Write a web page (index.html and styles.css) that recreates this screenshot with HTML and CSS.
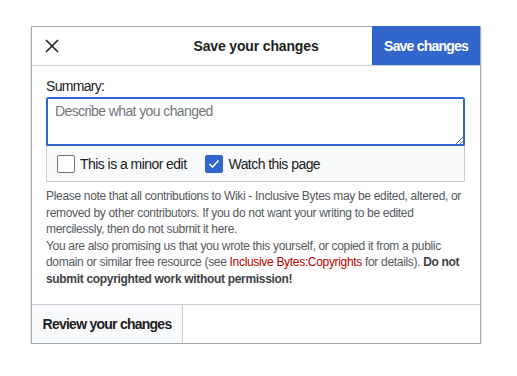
FILE: index.html
```html
<!DOCTYPE html>
<html lang="en">
<head>
    <meta charset="UTF-8">
    <meta name="viewport" content="width=device-width, initial-scale=1.0">
    <title>Save your changes</title>
    <link rel="stylesheet" href="styles.css">
</head>
<body>

    <div class="dialog">
        <div class="dialog-head">
            <div class="head-left">
                <button type="button" class="close-btn" aria-label="Close">
                    <svg width="14" height="14" viewBox="0 0 14 14">
                        <path d="M1 1 L13 13 M13 1 L1 13" stroke="#202122" stroke-width="1.6" fill="none"/>
                    </svg>
                </button>
            </div>
            <div class="title">Save your changes</div>
            <div class="head-right">
                <button type="button" class="save-btn">Save changes</button>
            </div>
        </div>

        <div class="dialog-body">
            <label class="summary-label" for="summary">Summary:</label>
            <textarea id="summary" class="summary" placeholder="Describe what you changed"></textarea>
            <div class="options">
                <label class="check">
                    <span class="box"></span>
                    This is a minor edit
                </label>
                <label class="check">
                    <span class="box checked">
                        <svg width="12" height="10" viewBox="0 0 12 10">
                            <path d="M1.5 5 L4.5 8 L10.5 1.5" stroke="#fff" stroke-width="1.6" fill="none"/>
                        </svg>
                    </span>
                    Watch this page
                </label>
            </div>

            <p class="license">
                Please note that all contributions to Wiki - Inclusive Bytes may be edited, altered, or removed by other contributors. If you do not want your writing to be edited mercilessly, then do not submit it here.<br>
                You are also promising us that you wrote this yourself, or copied it from a public domain or similar free resource (see <a href="#">Inclusive Bytes:Copyrights</a> for details). <b>Do not submit copyrighted work without permission!</b>
            </p>
        </div>

        <div class="dialog-foot">
            <button type="button" class="review-btn">Review your changes</button>
        </div>
    </div>

</body>
</html>
```

FILE: styles.css
```css
body {
    margin: 0;
    background-color: #ffffff;
    font-family: "Liberation Sans", Arial, sans-serif;
    color: #202122;
}
.dialog {
    margin: 26px 0 0 31px;
    width: 450px;
    height: 318px;
    box-sizing: border-box;
    border: 1px solid #a2a9b1;
    box-shadow: 0 2px 2px rgba(0, 0, 0, 0.2);
    display: flex;
    flex-direction: column;
}
.dialog-head {
    display: grid;
    grid-template-columns: 1fr auto 1fr;
    align-items: center;
    height: 38px;
    border-bottom: 1px solid #c8ccd1;
}
.head-right {
    display: flex;
    justify-content: flex-end;
    height: 100%;
}
.close-btn {
    background: none;
    border: none;
    padding: 0;
    margin-left: 13px;
    width: 14px;
    height: 14px;
    display: block;
    cursor: pointer;
}
.title {
    font-weight: bold;
    font-size: 14px;
    letter-spacing: -0.15px;
}
.save-btn {
    background-color: #3366cc;
    color: #ffffff;
    border: none;
    font-family: inherit;
    font-weight: bold;
    font-size: 14px;
    letter-spacing: -0.8px;
    width: 108px;
    height: 39px;
    margin-top: -1px;
    padding: 0;
    cursor: pointer;
}
.dialog-body {
    padding: 12px 15px 0 14px;
}
.summary-label {
    display: block;
    font-size: 14px;
    letter-spacing: -0.7px;
    line-height: 16px;
    margin-bottom: 3px;
}
.summary {
    display: block;
    width: 100%;
    height: 49px;
    box-sizing: border-box;
    border: 1px solid #3366cc;
    box-shadow: inset 0 0 0 1px #3366cc;
    border-radius: 2px 2px 0 0;
    padding: 5px 8px;
    font-family: inherit;
    font-size: 14px;
    letter-spacing: -0.6px;
    resize: vertical;
    outline: none;
    margin: 0;
}
.summary::placeholder {
    color: #72777d;
}
.options {
    display: flex;
    align-items: center;
    gap: 19px;
    height: 35px;
    padding-left: 10px;
    background-color: #f8f9fa;
    border: 1px solid #c8ccd1;
    border-top: none;
}
.check {
    display: flex;
    align-items: center;
    gap: 5px;
    font-size: 14px;
    letter-spacing: -0.55px;
    cursor: pointer;
}
.box {
    width: 18px;
    height: 18px;
    box-sizing: border-box;
    border: 1px solid #72777d;
    border-radius: 2px;
    background-color: #ffffff;
    display: flex;
    align-items: center;
    justify-content: center;
}
.box.checked {
    background-color: #3366cc;
    border-color: #3366cc;
}
.license {
    margin: 6px 0 0 0;
    font-size: 12px;
    line-height: 16.5px;
    letter-spacing: -0.32px;
    color: #54595d;
}
.license a {
    color: #ba0000;
    text-decoration: none;
}
.license b {
    color: #404244;
}
.dialog-foot {
    margin-top: auto;
    display: flex;
    height: 38px;
    border-top: 1px solid #c8ccd1;
}
.review-btn {
    width: 151px;
    background-color: #f8f9fa;
    border: none;
    border-right: 1px solid #c8ccd1;
    font-family: inherit;
    font-weight: bold;
    font-size: 14px;
    letter-spacing: -0.75px;
    color: #202122;
    padding: 0;
    cursor: pointer;
}
```
